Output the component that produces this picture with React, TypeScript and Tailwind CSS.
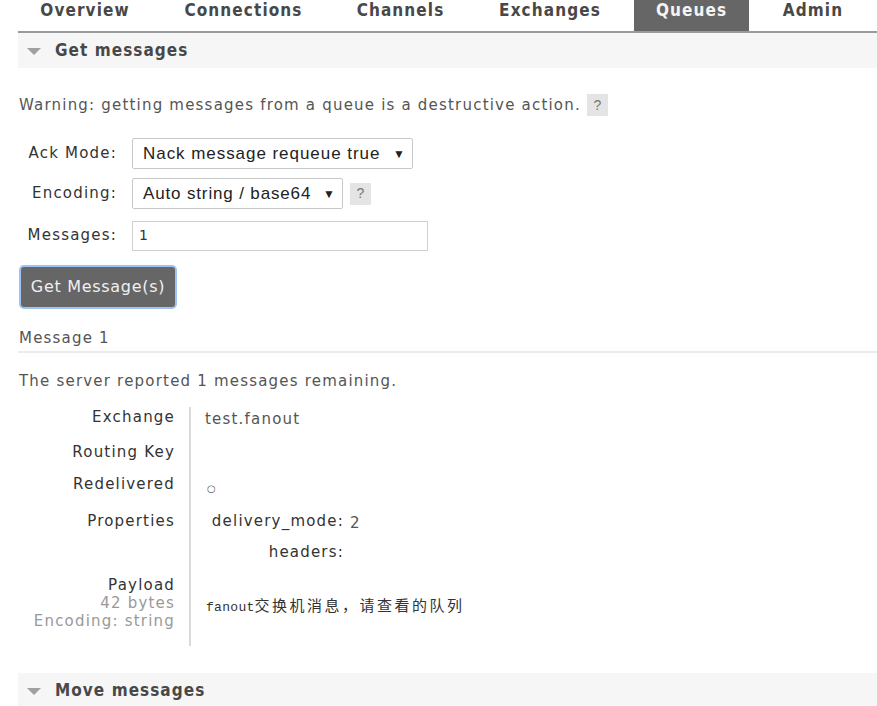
import React from "react";

const body = { fontFamily: '"DejaVu Sans", Verdana, sans-serif' };
const cond = { fontFamily: '"DejaVu Sans Condensed", "DejaVu Sans", sans-serif' };
const arial = { fontFamily: '"Liberation Sans", Arial, sans-serif' };

const tabs = [
  { name: "Overview", w: 134 },
  { name: "Connections", w: 161 },
  { name: "Channels", w: 131 },
  { name: "Exchanges", w: 146 },
  { name: "Queues", w: 115, active: true },
  { name: "Admin", w: 106 },
];

function Help() {
  return (
    <span
      className="inline-flex items-center justify-center w-[21px] h-[22px] bg-[#e4e4e4] text-[#777] text-[14px] tracking-normal"
      style={arial}
    >
      ?
    </span>
  );
}

function SectionHeader({ title }: { title: string }) {
  return (
    <div className="ml-[18px] h-[35px] bg-[#f6f6f6] flex items-center">
      <svg width="14" height="8" viewBox="0 0 14 8" className="ml-[9px] mr-[14px] mt-[2px]">
        <polygon points="0,0 14,0 7,7" fill="#a0a0a0" />
      </svg>
      <span className="text-[17px] font-bold text-[#484848] font-stretch-condensed tracking-[1.05px]" style={cond}>
        {title}
      </span>
    </div>
  );
}

export default function App() {
  return (
    <div
      className="w-[877px] h-[706px] overflow-hidden bg-white text-[15px] text-[#444] tracking-[1.2px]"
      style={body}
    >
      {/* nav */}
      <div className="ml-[18px] flex border-b-2 border-[#9a9a9a] h-[33px]">
        {tabs.map((t, i) => (
          <div
            key={t.name}
            className={`h-[31px] flex justify-center text-[17px] font-bold font-stretch-condensed tracking-[1.1px] ${
              t.active ? "bg-[#666] text-[#f4f4f4]" : "text-[#484848]"
            } ${i > 0 ? "ml-[11px]" : ""}`}
            style={{ ...cond, width: t.w }}
          >
            <span className="leading-[20px]">{t.name}</span>
          </div>
        ))}
      </div>

      <SectionHeader title="Get messages" />

      <div className="ml-[19px]">
        <div className="mt-[26px] h-[22px] flex items-center text-[#555]">
          <span>Warning: getting messages from a queue is a destructive action.</span>
          <span className="ml-[6px]">
            <Help />
          </span>
        </div>

        <div className="mt-[22px] flex flex-col gap-[9px]">
          <div className="flex items-center h-[31px]">
            <span className="w-[98px] text-right text-[#333]">Ack Mode:</span>
            <div
              className="ml-[15px] w-[281px] h-[31px] border border-[#c8c8c8] rounded-[2px] flex items-center pl-[10px] pr-[7px] text-[17px] text-[#222] tracking-[0.95px]"
              style={arial}
            >
              <span className="flex-1">Nack message requeue true</span>
              <span className="text-[12px] tracking-normal">▼</span>
            </div>
          </div>
          <div className="flex items-center h-[31px]">
            <span className="w-[98px] text-right text-[#333]">Encoding:</span>
            <div
              className="ml-[15px] w-[211px] h-[31px] border border-[#c8c8c8] rounded-[2px] flex items-center pl-[10px] pr-[7px] text-[17px] text-[#222] tracking-[0.85px]"
              style={arial}
            >
              <span className="flex-1">Auto string / base64</span>
              <span className="text-[12px] tracking-normal">▼</span>
            </div>
            <span className="ml-[7px]">
              <Help />
            </span>
          </div>
          <div className="flex items-center h-[31px] mt-[2px]">
            <span className="w-[98px] text-right text-[#333]">Messages:</span>
            <div className="ml-[15px] w-[296px] h-[30px] border border-[#d0d0d0] flex items-center pl-[6px] text-[14px] text-[#333]">
              1
            </div>
          </div>
        </div>

        <button
          className="mt-[14px] w-[158px] h-[44px] bg-[#666] rounded-[5px] border-2 border-[#9cc3f2] text-[#f0f0f0] text-[16px] tracking-[0.7px] flex items-center justify-center"
          style={body}
        >
          Get Message(s)
        </button>
      </div>

      <div className="ml-[18px] mt-[19px] border-b-2 border-[#ebebeb] pb-[3px]">
        <div className="ml-[1px] text-[#555] leading-[20px]">Message 1</div>
      </div>

      <div className="ml-[19px] mt-[18px] leading-[20px] text-[#555]">
        The server reported 1 messages remaining.
      </div>

      {/* table */}
      <div className="mt-[16px] grid grid-cols-[175px_1fr] w-[600px]">
        <div className="h-[35px] text-right text-[#333] leading-[20px]">Exchange</div>
        <div className="ml-[14px] border-l-2 border-[#dadada] pl-[14px] pt-[2px] leading-[20px] text-[#555]">
          test.fanout
        </div>

        <div className="h-[32px] text-right text-[#333] leading-[20px]">Routing Key</div>
        <div className="ml-[14px] border-l-2 border-[#dadada]"></div>

        <div className="h-[37px] text-right text-[#333] leading-[20px]">Redelivered</div>
        <div className="ml-[14px] border-l-2 border-[#dadada] pl-[16px] pt-[9px] leading-[12px] text-[10px] text-[#555]">
          ○
        </div>

        <div className="h-[65px] text-right text-[#333] leading-[20px]">Properties</div>
        <div className="ml-[14px] border-l-2 border-[#dadada] pl-[18px]">
          <div className="grid grid-cols-[135px_1fr] leading-[20px] text-[#333]">
            <span className="text-right">delivery_mode:</span>
            <span className="pl-[6px] pt-[2px] text-[#555]">2</span>
            <span className="text-right mt-[9px]">headers:</span>
            <span></span>
          </div>
        </div>

        <div className="h-[70px] text-right leading-[18px]">
          <div className="text-[#333]">Payload</div>
          <div className="text-[#999]">42 bytes</div>
          <div className="text-[#999]">Encoding: string</div>
        </div>
        <div className="ml-[14px] border-l-2 border-[#dadada] pl-[15px] pt-[19px] text-[#333] leading-[20px]">
          <span
            className="text-[13px] tracking-[0.3px]"
            style={{ fontFamily: '"Liberation Mono", "DejaVu Sans Mono", monospace' }}
          >
            fanout
          </span>
          <span className="text-[15px] tracking-[2.5px]" style={{ fontFamily: '"Noto Sans CJK SC", sans-serif' }}>
            交换机消息，请查看的队列
          </span>
        </div>
      </div>

      <div className="mt-[27px]">
        <SectionHeader title="Move messages" />
      </div>
    </div>
  );
}
